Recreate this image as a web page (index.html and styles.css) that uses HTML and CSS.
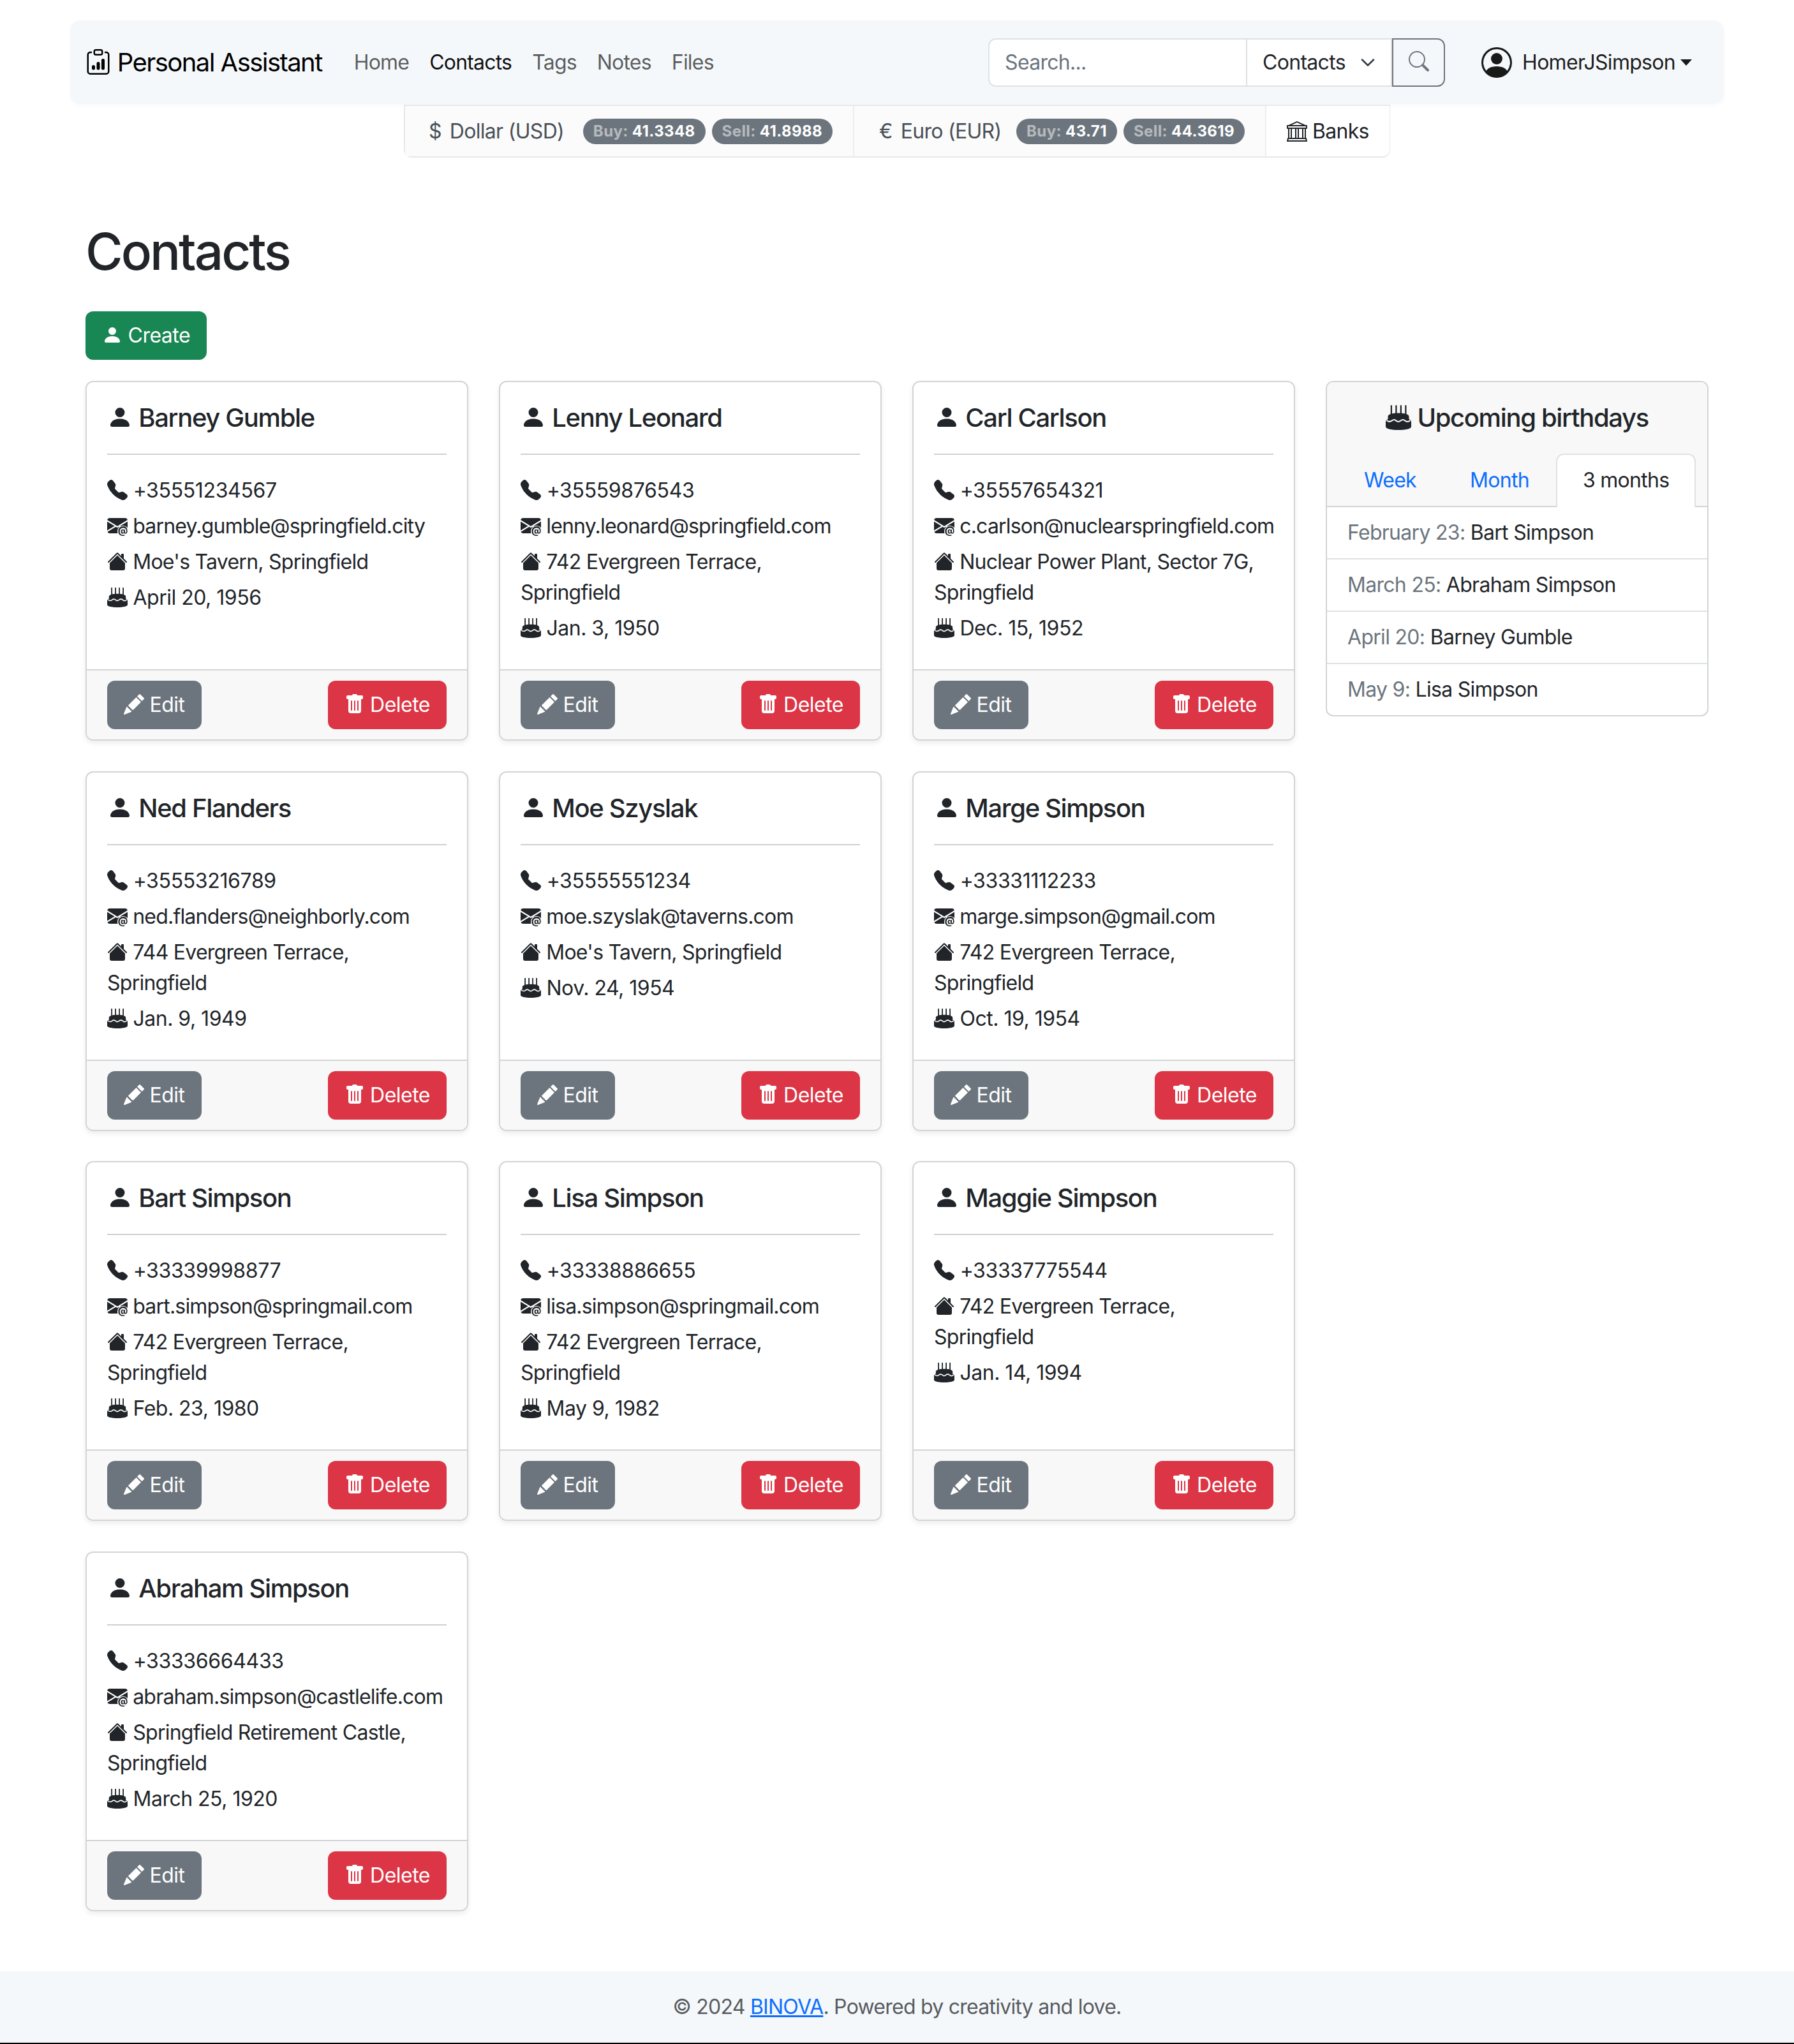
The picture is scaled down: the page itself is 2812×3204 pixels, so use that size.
FILE: index.html
```html
<!DOCTYPE html>
<html lang="en">
<head>
    <meta charset="UTF-8">
    <meta name="viewport" content="width=device-width, initial-scale=1.0">
    <title>Contacts - Personal Assistant</title>
    <link rel="stylesheet" href="styles.css">
</head>
<body>
    <!-- Icon sprite -->
    <svg class="sprite" xmlns="http://www.w3.org/2000/svg">
        <symbol id="i-brand" viewBox="0 0 16 16">
            <path d="M4 11a1 1 0 1 1 2 0v1a1 1 0 1 1-2 0v-1zm6-4a1 1 0 1 1 2 0v5a1 1 0 1 1-2 0V7zM7 9a1 1 0 0 1 2 0v3a1 1 0 1 1-2 0V9z"/>
            <path d="M4 1.5H3a2 2 0 0 0-2 2V14a2 2 0 0 0 2 2h10a2 2 0 0 0 2-2V3.5a2 2 0 0 0-2-2h-1v1h1a1 1 0 0 1 1 1V14a1 1 0 0 1-1 1H3a1 1 0 0 1-1-1V3.5a1 1 0 0 1 1-1h1v-1z"/>
            <path d="M9.5 1a.5.5 0 0 1 .5.5v1a.5.5 0 0 1-.5.5h-3a.5.5 0 0 1-.5-.5v-1a.5.5 0 0 1 .5-.5h3zm-3-1A1.5 1.5 0 0 0 5 1.5v1A1.5 1.5 0 0 0 6.5 4h3A1.5 1.5 0 0 0 11 2.5v-1A1.5 1.5 0 0 0 9.5 0h-3z"/>
        </symbol>
        <symbol id="i-person" viewBox="0 0 16 16">
            <path d="M3 14s-1 0-1-1 1-4 6-4 6 3 6 4-1 1-1 1H3Zm5-6a3 3 0 1 0 0-6 3 3 0 0 0 0 6Z"/>
        </symbol>
        <symbol id="i-phone" viewBox="0 0 16 16">
            <path fill-rule="evenodd" d="M1.885.511a1.745 1.745 0 0 1 2.61.163L6.29 2.98c.329.423.445.974.315 1.494l-.547 2.19a.678.678 0 0 0 .178.643l2.457 2.457a.678.678 0 0 0 .644.178l2.189-.547a1.745 1.745 0 0 1 1.494.315l2.306 1.794c.829.645.905 1.87.163 2.611l-1.034 1.034c-.74.74-1.846 1.065-2.877.702a18.634 18.634 0 0 1-7.01-4.42 18.634 18.634 0 0 1-4.42-7.009c-.362-1.03-.037-2.137.703-2.877L1.885.511z"/>
        </symbol>
        <symbol id="i-mail" viewBox="0 0 16 16">
            <path d="M2 2A2 2 0 0 0 .05 3.555L8 8.414l7.95-4.859A2 2 0 0 0 14 2H2Zm-2 9.8V4.698l5.803 3.546L0 11.801Zm6.761-2.97-6.57 4.026A2 2 0 0 0 2 14h6.256A4.493 4.493 0 0 1 8 12.5a4.49 4.49 0 0 1 1.606-3.446l-.367-.225L8 9.586l-1.239-.757ZM16 9.671V4.697l-5.803 3.546.338.208A4.482 4.482 0 0 1 12.5 8c1.414 0 2.675.652 3.5 1.671Z"/>
            <path d="M15.834 12.244c0 1.168-.577 2.025-1.587 2.025-.503 0-1.002-.228-1.12-.648h-.043c-.118.416-.543.643-1.015.643-.77 0-1.259-.542-1.259-1.434v-.529c0-.844.481-1.4 1.26-1.4.585 0 .87.333.953.63h.03v-.568h.905v2.19c0 .272.18.42.411.42.315 0 .639-.415.639-1.39v-.118c0-1.277-.95-2.326-2.484-2.326h-.04c-1.582 0-2.64 1.067-2.64 2.724v.157c0 1.867 1.237 2.654 2.57 2.654h.045c.507 0 .935-.07 1.18-.18v.731c-.219.1-.643.175-1.237.175h-.057C10.438 16 8.71 14.82 8.71 12.507v-.175C8.71 10.1 10.29 8.5 12.57 8.5h.05c2.106 0 3.214 1.258 3.214 3.744Zm-4.04.21v.227c0 .586.227.8.581.8.31 0 .564-.17.564-.743v-.367c0-.516-.275-.708-.572-.708-.346 0-.573.245-.573.791Z"/>
        </symbol>
        <symbol id="i-house" viewBox="0 0 16 16">
            <path d="M8.707 1.5a1 1 0 0 0-1.414 0L.646 8.146a.5.5 0 0 0 .708.708L8 2.207l6.646 6.647a.5.5 0 0 0 .708-.708L13 5.793V2.5a.5.5 0 0 0-.5-.5h-1a.5.5 0 0 0-.5.5v1.293L8.707 1.5Z"/>
            <path d="m8 3.293 6 6V13.5a1.5 1.5 0 0 1-1.5 1.5h-9A1.5 1.5 0 0 1 2 13.5V9.293l6-6Z"/>
        </symbol>
        <symbol id="i-cake" viewBox="0 0 16 16">
            <path d="M3.100 .5h.9v5.500h-.9zM6.100 .5h.9v5.500h-.9zM9.100 .5h.9v5.500h-.9zM12.100 .5h.9v5.500h-.9z"/>
            <path d="M8 5.400C4.300 5.400 1.400 6.100 1.400 7.600v1.600C.6 9.600 0 10.100 0 10.800V14c0 1.200 3.600 2 8 2s8-.8 8-2v-3.200c0-.7-.6-1.200-1.400-1.600V7.600c0-1.500-2.900-2.200-6.600-2.200Z"/>
            <path class="cake-wave" d="M.6 10c1.200 1 2.200 1 3.200.2s2-.8 2.800 0 1.700.8 2.700 0 2-.8 2.900 0 2.200.8 3.200-.2"/>
        </symbol>
        <symbol id="i-pencil" viewBox="0 0 16 16">
            <path d="M12.854.146a.5.5 0 0 0-.707 0L10.5 1.793 14.207 5.5l1.647-1.646a.5.5 0 0 0 0-.708l-3-3zm.646 6.061L9.793 2.5 3.293 9H3.500a.5.5 0 0 1 .5.5v.5h.5a.5.5 0 0 1 .5.5v.5h.5a.5.5 0 0 1 .5.5v.5h.5a.5.5 0 0 1 .5.5v.207l6.500-6.500zm-7.468 7.468A.5.5 0 0 1 6 13.500V13h-.5a.5.5 0 0 1-.5-.5V12h-.5a.5.5 0 0 1-.5-.5V11h-.5a.5.5 0 0 1-.5-.5V10h-.5a.499.499 0 0 1-.175-.032l-.179.178a.5.5 0 0 0-.11.168l-2 5a.5.5 0 0 0 .65.65l5-2a.5.5 0 0 0 .168-.11l.178-.178z"/>
        </symbol>
        <symbol id="i-trash" viewBox="0 0 16 16">
            <path d="M2.500 1a1 1 0 0 0-1 1v1a1 1 0 0 0 1 1H3v9a2 2 0 0 0 2 2h6a2 2 0 0 0 2-2V4h.5a1 1 0 0 0 1-1V2a1 1 0 0 0-1-1H10a1 1 0 0 0-1-1H7a1 1 0 0 0-1 1H2.500zm3 4a.5.5 0 0 1 .5.5v7a.5.5 0 0 1-1 0v-7a.5.5 0 0 1 .5-.5zM8 5a.5.5 0 0 1 .5.5v7a.5.5 0 0 1-1 0v-7A.5.5 0 0 1 8 5zm3 .5v7a.5.5 0 0 1-1 0v-7a.5.5 0 0 1 1 0z"/>
        </symbol>
        <symbol id="i-search" viewBox="0 0 16 16">
            <path d="M11.742 10.344a6.500 6.500 0 1 0-1.397 1.398h-.001c.03.04.062.078.098.115l3.850 3.850a1 1 0 0 0 1.415-1.414l-3.850-3.850a1.007 1.007 0 0 0-.115-.1zM12 6.500a5.500 5.500 0 1 1-11 0 5.500 5.500 0 0 1 11 0z"/>
        </symbol>
        <symbol id="i-user" viewBox="0 0 16 16">
            <path d="M11 6a3 3 0 1 1-6 0 3 3 0 0 1 6 0z"/>
            <path fill-rule="evenodd" d="M0 8a8 8 0 1 1 16 0A8 8 0 0 1 0 8zm8-7a7 7 0 0 0-5.468 11.370C3.242 11.226 4.805 10 8 10s4.757 1.225 5.468 2.370A7 7 0 0 0 8 1z"/>
        </symbol>
        <symbol id="i-bank" viewBox="0 0 16 16">
            <path d="m8 0 6.610 3h.89a.5.5 0 0 1 .5.5v2a.5.5 0 0 1-.5.5H15v7a.5.5 0 0 1 .485.38l.5 2a.498.498 0 0 1-.485.62H.5a.498.498 0 0 1-.485-.62l.5-2A.501.501 0 0 1 1 13V6H.5a.5.5 0 0 1-.5-.5v-2A.5.5 0 0 1 .5 3h.89L8 0ZM3.777 3h8.447L8 1 3.777 3ZM2 6v7h1V6H2Zm2 0v7h2.500V6H4Zm3.500 0v7h1V6h-1Zm2 0v7H12V6H9.500ZM13 6v7h1V6h-1Zm2-1V4H1v1h14Zm-.39 9H1.390l-.25 1h13.720l-.25-1Z"/>
        </symbol>
    </svg>

    <div class="page">
        <!-- Navbar -->
        <nav class="navbar">
            <a class="brand" href="#"><svg class="bi"><use href="#i-brand"/></svg> Personal Assistant</a>
            <ul class="nav-links">
                <li><a href="#">Home</a></li>
                <li><a class="active" href="#">Contacts</a></li>
                <li><a href="#">Tags</a></li>
                <li><a href="#">Notes</a></li>
                <li><a href="#">Files</a></li>
            </ul>
            <form class="search">
                <input class="search-input" type="text" placeholder="Search...">
                <div class="search-select">
                    <span>Contacts</span>
                    <svg class="chevron" viewBox="0 0 16 16"><path d="m2 5 6 6 6-6"/></svg>
                </div>
                <button class="search-btn" type="button"><svg class="bi"><use href="#i-search"/></svg></button>
            </form>
            <a class="user" href="#"><svg class="bi user-icon"><use href="#i-user"/></svg><span>HomerJSimpson</span><i class="caret"></i></a>
        </nav>

        <!-- Exchange rates -->
        <div class="rates">
            <div class="rate rate-usd">
                <span class="currency"><i>$</i>Dollar (USD)</span>
                <span class="badges">
                    <span class="badge"><em>Buy:</em> 41.3348</span>
                    <span class="badge"><em>Sell:</em> 41.8988</span>
                </span>
            </div>
            <div class="rate rate-eur">
                <span class="currency"><i>€</i>Euro (EUR)</span>
                <span class="badges">
                    <span class="badge"><em>Buy:</em> 43.71</span>
                    <span class="badge"><em>Sell:</em> 44.3619</span>
                </span>
            </div>
            <a class="rate rate-banks" href="#"><svg class="bi"><use href="#i-bank"/></svg><span>Banks</span></a>
        </div>

        <!-- Main content -->
        <main class="content">
            <h1>Contacts</h1>
            <a class="btn btn-green btn-create" href="#"><svg class="bi"><use href="#i-person"/></svg> Create</a>

            <div class="layout">
                <div class="cards">
                    <article class="card">
                        <div class="card-body">
                            <h5><svg class="bi"><use href="#i-person"/></svg> Barney Gumble</h5>
                            <hr>
                            <p class="phone"><svg class="bi"><use href="#i-phone"/></svg> +35551234567</p>
                            <p class="email"><svg class="bi"><use href="#i-mail"/></svg> barney.gumble@springfield.city</p>
                            <p><svg class="bi"><use href="#i-house"/></svg> Moe's Tavern, Springfield</p>
                            <p class="date"><svg class="bi"><use href="#i-cake"/></svg> April 20, 1956</p>
                        </div>
                        <div class="card-footer">
                            <a class="btn btn-gray" href="#"><svg class="bi"><use href="#i-pencil"/></svg> Edit</a>
                            <a class="btn btn-red" href="#"><svg class="bi"><use href="#i-trash"/></svg> Delete</a>
                        </div>
                    </article>
                    <article class="card">
                        <div class="card-body">
                            <h5><svg class="bi"><use href="#i-person"/></svg> Lenny Leonard</h5>
                            <hr>
                            <p class="phone"><svg class="bi"><use href="#i-phone"/></svg> +35559876543</p>
                            <p class="email"><svg class="bi"><use href="#i-mail"/></svg> lenny.leonard@springfield.com</p>
                            <p><svg class="bi"><use href="#i-house"/></svg> 742 Evergreen Terrace,<br>Springfield</p>
                            <p class="date"><svg class="bi"><use href="#i-cake"/></svg> Jan. 3, 1950</p>
                        </div>
                        <div class="card-footer">
                            <a class="btn btn-gray" href="#"><svg class="bi"><use href="#i-pencil"/></svg> Edit</a>
                            <a class="btn btn-red" href="#"><svg class="bi"><use href="#i-trash"/></svg> Delete</a>
                        </div>
                    </article>
                    <article class="card">
                        <div class="card-body">
                            <h5><svg class="bi"><use href="#i-person"/></svg> Carl Carlson</h5>
                            <hr>
                            <p class="phone"><svg class="bi"><use href="#i-phone"/></svg> +35557654321</p>
                            <p class="email"><svg class="bi"><use href="#i-mail"/></svg> c.carlson@nuclearspringfield.com</p>
                            <p><svg class="bi"><use href="#i-house"/></svg> Nuclear Power Plant, Sector 7G,<br>Springfield</p>
                            <p class="date"><svg class="bi"><use href="#i-cake"/></svg> Dec. 15, 1952</p>
                        </div>
                        <div class="card-footer">
                            <a class="btn btn-gray" href="#"><svg class="bi"><use href="#i-pencil"/></svg> Edit</a>
                            <a class="btn btn-red" href="#"><svg class="bi"><use href="#i-trash"/></svg> Delete</a>
                        </div>
                    </article>
                    <article class="card">
                        <div class="card-body">
                            <h5><svg class="bi"><use href="#i-person"/></svg> Ned Flanders</h5>
                            <hr>
                            <p class="phone"><svg class="bi"><use href="#i-phone"/></svg> +35553216789</p>
                            <p class="email"><svg class="bi"><use href="#i-mail"/></svg> ned.flanders@neighborly.com</p>
                            <p><svg class="bi"><use href="#i-house"/></svg> 744 Evergreen Terrace,<br>Springfield</p>
                            <p class="date"><svg class="bi"><use href="#i-cake"/></svg> Jan. 9, 1949</p>
                        </div>
                        <div class="card-footer">
                            <a class="btn btn-gray" href="#"><svg class="bi"><use href="#i-pencil"/></svg> Edit</a>
                            <a class="btn btn-red" href="#"><svg class="bi"><use href="#i-trash"/></svg> Delete</a>
                        </div>
                    </article>
                    <article class="card">
                        <div class="card-body">
                            <h5><svg class="bi"><use href="#i-person"/></svg> Moe Szyslak</h5>
                            <hr>
                            <p class="phone"><svg class="bi"><use href="#i-phone"/></svg> +35555551234</p>
                            <p class="email"><svg class="bi"><use href="#i-mail"/></svg> moe.szyslak@taverns.com</p>
                            <p><svg class="bi"><use href="#i-house"/></svg> Moe's Tavern, Springfield</p>
                            <p class="date"><svg class="bi"><use href="#i-cake"/></svg> Nov. 24, 1954</p>
                        </div>
                        <div class="card-footer">
                            <a class="btn btn-gray" href="#"><svg class="bi"><use href="#i-pencil"/></svg> Edit</a>
                            <a class="btn btn-red" href="#"><svg class="bi"><use href="#i-trash"/></svg> Delete</a>
                        </div>
                    </article>
                    <article class="card">
                        <div class="card-body">
                            <h5><svg class="bi"><use href="#i-person"/></svg> Marge Simpson</h5>
                            <hr>
                            <p class="phone"><svg class="bi"><use href="#i-phone"/></svg> +33331112233</p>
                            <p class="email"><svg class="bi"><use href="#i-mail"/></svg> marge.simpson@gmail.com</p>
                            <p><svg class="bi"><use href="#i-house"/></svg> 742 Evergreen Terrace,<br>Springfield</p>
                            <p class="date"><svg class="bi"><use href="#i-cake"/></svg> Oct. 19, 1954</p>
                        </div>
                        <div class="card-footer">
                            <a class="btn btn-gray" href="#"><svg class="bi"><use href="#i-pencil"/></svg> Edit</a>
                            <a class="btn btn-red" href="#"><svg class="bi"><use href="#i-trash"/></svg> Delete</a>
                        </div>
                    </article>
                    <article class="card">
                        <div class="card-body">
                            <h5><svg class="bi"><use href="#i-person"/></svg> Bart Simpson</h5>
                            <hr>
                            <p class="phone"><svg class="bi"><use href="#i-phone"/></svg> +33339998877</p>
                            <p class="email"><svg class="bi"><use href="#i-mail"/></svg> bart.simpson@springmail.com</p>
                            <p><svg class="bi"><use href="#i-house"/></svg> 742 Evergreen Terrace,<br>Springfield</p>
                            <p class="date"><svg class="bi"><use href="#i-cake"/></svg> Feb. 23, 1980</p>
                        </div>
                        <div class="card-footer">
                            <a class="btn btn-gray" href="#"><svg class="bi"><use href="#i-pencil"/></svg> Edit</a>
                            <a class="btn btn-red" href="#"><svg class="bi"><use href="#i-trash"/></svg> Delete</a>
                        </div>
                    </article>
                    <article class="card">
                        <div class="card-body">
                            <h5><svg class="bi"><use href="#i-person"/></svg> Lisa Simpson</h5>
                            <hr>
                            <p class="phone"><svg class="bi"><use href="#i-phone"/></svg> +33338886655</p>
                            <p class="email"><svg class="bi"><use href="#i-mail"/></svg> lisa.simpson@springmail.com</p>
                            <p><svg class="bi"><use href="#i-house"/></svg> 742 Evergreen Terrace,<br>Springfield</p>
                            <p class="date"><svg class="bi"><use href="#i-cake"/></svg> May 9, 1982</p>
                        </div>
                        <div class="card-footer">
                            <a class="btn btn-gray" href="#"><svg class="bi"><use href="#i-pencil"/></svg> Edit</a>
                            <a class="btn btn-red" href="#"><svg class="bi"><use href="#i-trash"/></svg> Delete</a>
                        </div>
                    </article>
                    <article class="card">
                        <div class="card-body">
                            <h5><svg class="bi"><use href="#i-person"/></svg> Maggie Simpson</h5>
                            <hr>
                            <p class="phone"><svg class="bi"><use href="#i-phone"/></svg> +33337775544</p>
                            <p><svg class="bi"><use href="#i-house"/></svg> 742 Evergreen Terrace,<br>Springfield</p>
                            <p class="date"><svg class="bi"><use href="#i-cake"/></svg> Jan. 14, 1994</p>
                        </div>
                        <div class="card-footer">
                            <a class="btn btn-gray" href="#"><svg class="bi"><use href="#i-pencil"/></svg> Edit</a>
                            <a class="btn btn-red" href="#"><svg class="bi"><use href="#i-trash"/></svg> Delete</a>
                        </div>
                    </article>
                    <article class="card">
                        <div class="card-body">
                            <h5><svg class="bi"><use href="#i-person"/></svg> Abraham Simpson</h5>
                            <hr>
                            <p class="phone"><svg class="bi"><use href="#i-phone"/></svg> +33336664433</p>
                            <p class="email"><svg class="bi"><use href="#i-mail"/></svg> abraham.simpson@castlelife.com</p>
                            <p><svg class="bi"><use href="#i-house"/></svg> Springfield Retirement Castle,<br>Springfield</p>
                            <p class="date"><svg class="bi"><use href="#i-cake"/></svg> March 25, 1920</p>
                        </div>
                        <div class="card-footer">
                            <a class="btn btn-gray" href="#"><svg class="bi"><use href="#i-pencil"/></svg> Edit</a>
                            <a class="btn btn-red" href="#"><svg class="bi"><use href="#i-trash"/></svg> Delete</a>
                        </div>
                    </article>
                </div>

                <!-- Birthdays sidebar -->
                <aside class="birthdays">
                    <div class="birthdays-head">
                        <h5><svg class="bi"><use href="#i-cake"/></svg> Upcoming birthdays</h5>
                        <ul class="tabs">
                            <li><a href="#">Week</a></li>
                            <li><a href="#">Month</a></li>
                            <li><a class="active" href="#">3 months</a></li>
                        </ul>
                    </div>
                    <ul class="birthday-list">
                        <li><span>February 23:</span> Bart Simpson</li>
                        <li><span>March 25:</span> Abraham Simpson</li>
                        <li><span>April 20:</span> Barney Gumble</li>
                        <li><span>May 9:</span> Lisa Simpson</li>
                    </ul>
                </aside>
            </div>
        </main>

        <!-- Footer -->
        <footer class="footer">© 2024 <a href="#">BINOVA</a>. Powered by creativity and love.</footer>
    </div>
</body>
</html>
```

FILE: styles.css
```css
/* General page settings */
html {
    background: #000;
}

body {
    margin: 0;
    font-family: 'Inter', 'Liberation Sans', sans-serif;
    font-size: 32px;
    line-height: 48px;
    letter-spacing: -0.7px;
    color: #212529;
}

.page {
    padding-top: 32px;
    background: #fff;
}

a {
    text-decoration: none;
    color: inherit;
}

ul {
    list-style: none;
    margin: 0;
    padding: 0;
}

.sprite {
    display: none;
}

.bi {
    width: 1em;
    height: 1em;
    vertical-align: -0.125em;
    fill: currentColor;
}

.cake-wave {
    fill: none;
    stroke: #fff;
    stroke-width: 0.8;
}

/* Navbar */
.navbar {
    display: flex;
    align-items: center;
    height: 131px;
    margin: 0 110px;
    padding: 0 24px;
    box-sizing: border-box;
    background: #f5f8fb;
    border-radius: 16px;
    box-shadow: 0 2px 6px rgba(0, 0, 0, 0.03);
}

.brand {
    font-size: 40px;
    color: #000;
    white-space: nowrap;
    margin-right: 34px;
    letter-spacing: -1.55px;
}

.nav-links {
    display: flex;
    flex: 1;
}

.nav-links a {
    display: block;
    padding: 16px;
    color: rgba(0, 0, 0, 0.65);
    letter-spacing: -0.8px;
}

.nav-links a.active {
    color: rgba(0, 0, 0, 0.95);
}

.search {
    display: flex;
    height: 76px;
    margin: 0;
}

.search-input {
    width: 404px;
    box-sizing: border-box;
    padding: 0 24px;
    border: 2px solid #dee2e6;
    border-right: 0;
    border-radius: 12px 0 0 12px;
    background: #fff;
    font: inherit;
    letter-spacing: inherit;
    outline: none;
}

.search-input::placeholder {
    color: #6c757d;
    opacity: 1;
}

.search-select {
    display: flex;
    align-items: center;
    justify-content: space-between;
    width: 229px;
    box-sizing: border-box;
    padding: 0 24px;
    border: 2px solid #dee2e6;
    background: #fff;
}

.chevron {
    width: 24px;
    height: 24px;
    fill: none;
    stroke: #343a40;
    stroke-width: 1.7;
    stroke-linecap: round;
    stroke-linejoin: round;
}

.search-btn {
    width: 83px;
    margin: 0;
    padding: 0;
    border: 2px solid #6c757d;
    border-radius: 0 12px 12px 0;
    background: transparent;
    color: #6c757d;
    font-size: 32px;
}

.user {
    display: flex;
    align-items: center;
    margin-left: 57px;
    margin-right: 26px;
    color: rgba(0, 0, 0, 0.9);
}

.user-icon {
    width: 48px;
    height: 48px;
    margin-right: 16px;
}

.caret {
    width: 0;
    height: 0;
    margin-left: 8px;
    border-top: 10px solid currentColor;
    border-left: 9px solid transparent;
    border-right: 9px solid transparent;
}

/* Exchange rates bar */
.rates {
    display: flex;
    width: 1546px;
    height: 83px;
    margin: 1px 0 0 633px;
    box-sizing: border-box;
    border: 2px solid #e6e8ea;
    border-radius: 0 0 12px 12px;
}

.rate {
    display: flex;
    flex-shrink: 0;
    align-items: center;
    box-sizing: border-box;
    background: #fbfbfb;
    border-right: 2px solid #eceef0;
    color: #495057;
    justify-content: space-between;
}

.rate-usd {
    width: 704px;
    padding: 0 32px 0 37px;
}

.rate-eur {
    width: 646px;
    padding: 0 32px 0 39px;
}

.rate-banks {
    flex: 1;
    justify-content: flex-start;
    gap: 8px;
    padding: 0 32px;
    background: #fff;
    border-right: 0;
    border-radius: 0 0 10px 0;
    color: #212529;
}

.currency {
    white-space: nowrap;
}

.currency i {
    font-style: normal;
    display: inline-block;
    margin-right: 13px;
}

.badges {
    display: flex;
    gap: 10px;
}

.badge {
    padding: 8px 16px;
    border-radius: 999px;
    background: #6c757d;
    color: #fff;
    font-size: 24px;
    font-weight: 700;
    line-height: 24px;
    letter-spacing: 0.4px;
    white-space: nowrap;
}

.badge em {
    font-style: normal;
    opacity: 0.5;
}

/* Main content */
.content {
    padding: 99px 134px 0;
}

h1 {
    margin: 0 0 46px;
    font-size: 80px;
    font-weight: 500;
    line-height: 96px;
    letter-spacing: -3px;
}

.btn {
    display: inline-block;
    padding: 14px 26px;
    border-radius: 12px;
    color: #fff;
    letter-spacing: -0.5px;
}

.btn-green {
    background: #198754;
}

.btn-gray {
    background: #6c757d;
}

.btn-red {
    background: #dc3545;
}

.layout {
    display: grid;
    grid-template-columns: minmax(0, 1fr) 600px;
    gap: 48px;
    align-items: start;
    margin-top: 33px;
}

.cards {
    display: grid;
    grid-template-columns: repeat(3, minmax(0, 1fr));
    gap: 47.5px 48px;
}

/* Contact card */
.card {
    display: flex;
    flex-direction: column;
    border: 2px solid #d3d4d5;
    border-radius: 12px;
    box-shadow: 0 4px 8px rgba(0, 0, 0, 0.075);
}

.card-body {
    flex: 1;
    padding: 32px;
}

h5 {
    margin: 0;
    font-size: 40px;
    font-weight: 500;
    line-height: 48px;
    letter-spacing: -1.35px;
}

hr {
    height: 2px;
    margin: 32px 0;
    border: 0;
    background: #cfd0d1;
}

.card-body p {
    margin: 0 0 8px;
    white-space: nowrap;
    letter-spacing: -0.75px;
}

.card-body p.phone {
    letter-spacing: -0.35px;
}

.card-body p.email {
    letter-spacing: -0.8px;
}

.card-body p.date {
    letter-spacing: -0.5px;
}

.card-footer {
    display: flex;
    justify-content: space-between;
    padding: 16px 32px;
    border-top: 2px solid #d3d4d5;
    background: #f8f8f8;
    border-radius: 0 0 10px 10px;
}

/* Birthdays sidebar */
.birthdays {
    border: 2px solid #d3d4d5;
    border-radius: 12px;
}

.birthdays-head {
    padding: 32px 32px 0;
    background: #f8f8f8;
    border-bottom: 2px solid #d3d4d5;
    border-radius: 10px 10px 0 0;
}

.birthdays-head h5 {
    text-align: center;
    margin-bottom: 32px;
}

.tabs {
    display: flex;
    margin: 0 -16px -2px;
}

.tabs a {
    display: block;
    padding: 16px 40px;
    border: 2px solid transparent;
    border-bottom: 0;
    color: #0d6efd;
    white-space: nowrap;
}

.tabs a.active {
    padding-bottom: 18px;
    background: #fff;
    border-color: #dee2e6;
    border-radius: 12px 12px 0 0;
    color: #212529;
}

.birthday-list li {
    padding: 16px 32px;
    border-top: 2px solid #dee2e6;
}

.birthday-list li:first-child {
    border-top: 0;
}

.birthday-list span {
    color: #6c757d;
}

/* Footer */
.footer {
    margin-top: 94.5px;
    padding: 32px 0;
    background: #f5f8fb;
    color: #585c60;
    text-align: center;
    letter-spacing: -0.75px;
}

.footer a {
    color: #0d6efd;
    text-decoration: underline;
}
```
